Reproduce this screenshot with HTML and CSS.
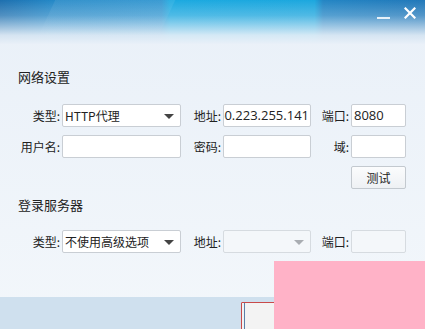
FILE: index.html
```html
<!DOCTYPE html>
<html>
<head>
    <meta charset="UTF-8">
    <title>网络设置</title>
    <link rel="stylesheet" href="styles.css">
</head>
<body>
<div class="window">
    <div class="titlebar">
        <div class="sheen"></div>
        <div class="controls">
            <span class="btn-min"></span>
            <svg class="btn-close" width="12" height="12" viewBox="0 0 12 12">
                <path d="M1.5 1.5 L10.5 10.5 M10.5 1.5 L1.5 10.5" stroke="#fff" stroke-width="2.2" stroke-linecap="square"/>
            </svg>
        </div>
    </div>

    <div class="content">
        <h2>网络设置</h2>
        <div class="form-grid">
            <label>类型:</label>
            <div class="select">HTTP代理<span class="arrow"></span></div>
            <label>地址:</label>
            <div class="field scroll"><span>60.223.255.141</span></div>
            <label>端口:</label>
            <div class="field num">8080</div>

            <label>用户名:</label>
            <div class="field"></div>
            <label>密码:</label>
            <div class="field"></div>
            <label>域:</label>
            <div class="field"></div>

            <div class="skip"></div>
            <button class="test">测试</button>
        </div>

        <h2 class="second">登录服务器</h2>
        <div class="form-grid">
            <label>类型:</label>
            <div class="select">不使用高级选项<span class="arrow"></span></div>
            <label>地址:</label>
            <div class="select disabled"><span class="arrow"></span></div>
            <label>端口:</label>
            <div class="field disabled"></div>
        </div>
    </div>

    <div class="footer">
        <button class="ok"></button>
    </div>

    <div class="overlay"></div>
</div>
</body>
</html>
```

FILE: styles.css
```css
body {
    margin: 0;
    font-family: "Noto Sans CJK SC", "Noto Sans", sans-serif;
    font-size: 12px;
    color: #222;
}
.window {
    position: relative;
    width: 425px;
    height: 329px;
    overflow: hidden;
    display: flex;
    flex-direction: column;
    background: linear-gradient(to bottom, #e9f0f8, #f3f7fb);
}
.titlebar {
    position: relative;
    height: 44px;
    flex-shrink: 0;
    background:
        linear-gradient(to bottom, rgba(233,240,248,0) 0%, rgba(233,240,248,0.25) 35%, rgba(233,240,248,0.9) 80%, #e9f0f8 100%),
        linear-gradient(to right, #1d6fae 0%, #2387c6 12%, #2a93cf 38%, #1ba9e0 40%, #1ca7de 74%, #2385c4 76%, #2178b9 100%);
}
.sheen {
    position: absolute;
    left: 45px;
    top: 0;
    width: 120px;
    height: 44px;
    background: linear-gradient(to bottom, rgba(255,255,255,0.08), rgba(255,255,255,0));
    transform: skewX(-25deg);
}
.controls {
    position: absolute;
    right: 9px;
    top: 7px;
    display: flex;
    align-items: center;
    gap: 14px;
}
.btn-min {
    display: block;
    width: 13px;
    height: 2px;
    margin-top: 10px;
    background: #e8f2fa;
}
.btn-close {
    display: block;
}

.content {
    flex: 1;
    padding: 23px 18px 0;
}
h2 {
    margin: 0 0 17px;
    font-size: 13px;
    font-weight: normal;
    line-height: 20px;
    color: #222;
}
h2.second {
    margin: 6px 0 15px;
}
.form-grid {
    display: grid;
    grid-template-columns: 44px 119px 42px 88px 40px 55px;
    grid-auto-rows: 23px;
    row-gap: 8px;
}
.form-grid label {
    text-align: right;
    padding-right: 2px;
    line-height: 23px;
    color: #222;
}
.field, .select {
    position: relative;
    box-sizing: border-box;
    height: 23px;
    border: 1px solid #c9ced4;
    border-radius: 2px;
    background: #fff;
    line-height: 21px;
    padding: 0 2px;
    overflow: hidden;
    white-space: nowrap;
}
.field.num {
    font-family: "Open Sans", "Noto Sans", sans-serif;
    font-size: 13px;
}
.field.scroll {
    display: flex;
    justify-content: flex-end;
    font-family: "Open Sans", "Noto Sans", sans-serif;
    font-size: 13px;
    padding-right: 1px;
}
.field.scroll span {
    flex-shrink: 0;
}
.field.disabled, .select.disabled {
    background: #f4f7fa;
    border-color: #d6dbe0;
}
.arrow {
    position: absolute;
    right: 6px;
    top: 9px;
    width: 0;
    height: 0;
    border-left: 5px solid transparent;
    border-right: 5px solid transparent;
    border-top: 5px solid #444;
}
.select.disabled .arrow {
    border-top-color: #a9adb2;
}
.skip {
    grid-column: 1 / 6;
}
.test {
    box-sizing: border-box;
    height: 23px;
    border: 1px solid #c3c9cf;
    border-radius: 2px;
    background: linear-gradient(to bottom, #fbfcfd, #eef1f4);
    font-family: "Noto Sans CJK SC", sans-serif;
    font-size: 12px;
    color: #222;
    padding: 0;
    cursor: pointer;
}

.footer {
    height: 32px;
    flex-shrink: 0;
    background: #cfe0ee;
    padding-left: 241px;
    padding-top: 5px;
    box-sizing: border-box;
}
.ok {
    display: block;
    width: 70px;
    height: 30px;
    box-sizing: border-box;
    border: 1px solid #c84a4a;
    border-radius: 1px;
    background: #f3f3f3;
    box-shadow: inset 2px 0 0 #f3f3f3, inset 3px 0 0 #5a7fa8;
    padding: 0;
}

.overlay {
    position: absolute;
    left: 274px;
    top: 261px;
    right: 0;
    bottom: 0;
    background: #ffb2c7;
}
```
